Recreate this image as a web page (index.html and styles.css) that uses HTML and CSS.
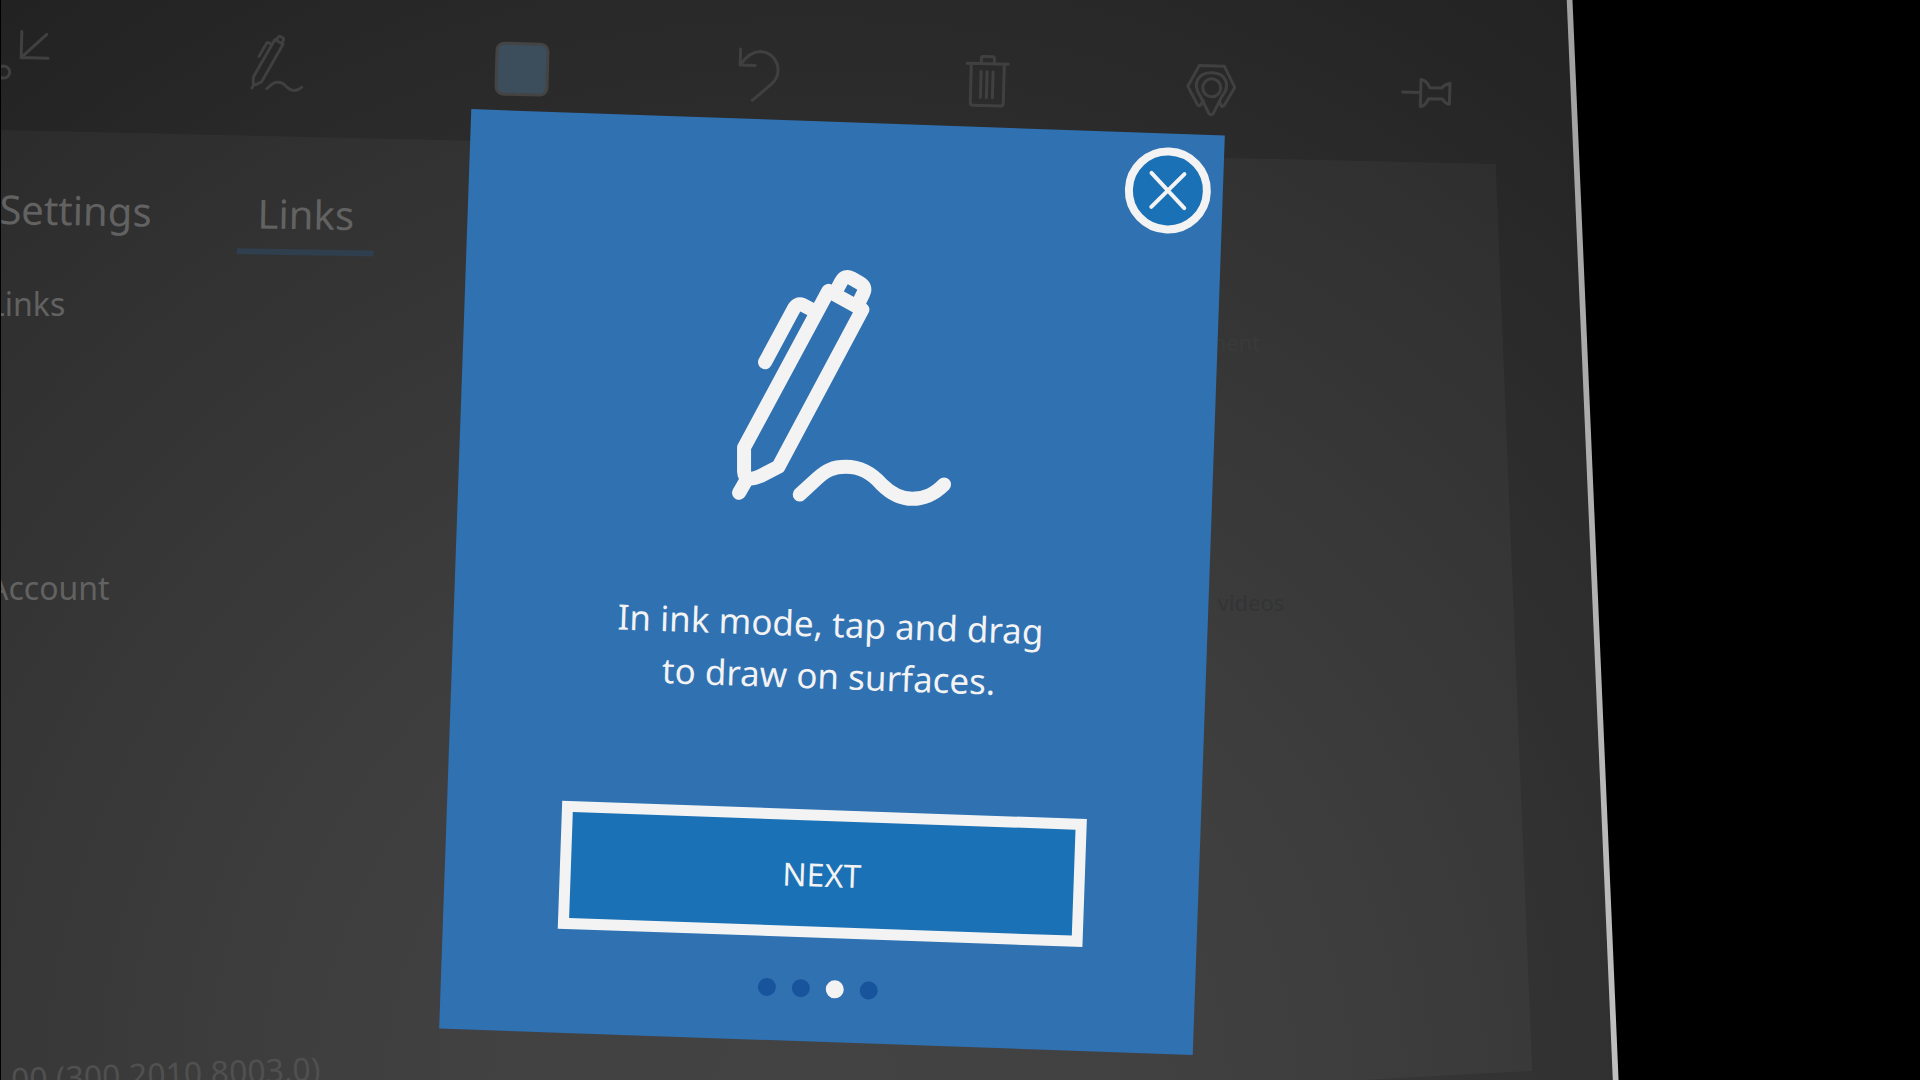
FILE: index.html
```html
<!DOCTYPE html>
<html lang="en">
<head>
<meta charset="utf-8">
<title>Ink mode</title>
<link rel="stylesheet" href="styles.css">
</head>
<body>
<svg class="defs" aria-hidden="true">
  <symbol id="pen" viewBox="0 0 840 840">
    <path d="M385 124 L487 180 L235 652 L180 680 Q133 700 132 665 L132 594 Z"/>
    <path d="M405 130 L424 95 Q435 76 454 86 L480 101 Q499 112 490 131 L476 160"/>
    <path d="M195 338 L280 180 Q290 160 308 166 L338 182"/>
    <path d="M117 730 L137 695"/>
    <path d="M299 735 L350 688 C378 662 400 652 437 652 C480 652 512 668 545 705 C575 735 602 748 637 748 C675 748 702 735 732 705"/>
  </symbol>
</svg>
<main class="stage">
  <div class="edge"></div>
  <div class="slate">
    <div class="toolbar" role="toolbar" aria-label="Tools">
      <button class="tool" aria-label="Minimize"><svg viewBox="0 0 60 60"><path d="M22 6V32H49M47 8L22 32"/><circle cx="5" cy="47" r="6"/></svg></button>
      <button class="tool" aria-label="Ink"><svg class="tool-pen" viewBox="0 0 60 60"><use href="#pen" x="-4" y="-3" width="68" height="68"/></svg></button>
      <button class="tool" aria-label="Colour"><span class="swatch"></span></button>
      <button class="tool" aria-label="Undo"><svg viewBox="0 0 60 60"><path d="M10 4V20H25M10 20C16 11 22 6 30 6C41 6 48 15 48 25C48 31 46 34 42 38L23 55"/></svg></button>
      <button class="tool" aria-label="Delete"><svg viewBox="0 0 60 60"><path d="M10 12H51M14 12V51Q14 54 17 54H44Q47 54 47 51V12M24 12V7Q24 5 26 5H35Q37 5 37 7V12M24 20V46M30 20V46M36 20V46"/></svg></button>
      <button class="tool" aria-label="Locate"><svg viewBox="0 0 60 60"><path d="M22 43L19 48Q17 49 16 47L6 29L17 8H42L53 29L43 47Q42 49 40 48L38 43M32 56Q30 58 28 56L19 39C9 25 17 15 30 15C43 15 50 26 40 39Z"/><circle cx="30" cy="30" r="9"/></svg></button>
      <button class="tool" aria-label="Pin"><svg viewBox="0 0 60 60"><path d="M5 29H23M23 16V43Q28 43 31 35H45Q47 39 52 40V19Q47 20 44 24H32Q28 16 23 16Z"/></svg></button>
    </div>
    <section class="panel">
      <nav class="tabs">
        <a class="tab" href="#settings">Settings</a>
        <a class="tab tab-active" href="#links">Links</a>
      </nav>
      <div class="columns">
        <div class="groups">
          <h2>Links</h2>
          <h2>Account</h2>
          <p class="version">00 (300.2010.8003.0)</p>
        </div>
        <ul class="items">
          <li>ment</li>
          <li class="step-1">o</li>
          <li class="step-2">videos</li>
        </ul>
      </div>
    </section>
  </div>
  <div class="overlay">
    <section class="card" role="dialog" aria-labelledby="message">
      <button class="close" aria-label="Close"><svg viewBox="0 0 70 70"><path d="M18 18L52 52M51 18L19 52"/></svg></button>
      <svg class="pen" viewBox="-4 0 840 840" aria-hidden="true"><g transform="rotate(-2 450 420)"><use href="#pen" width="840" height="840"/></g></svg>
      <p class="message" id="message">In ink mode, tap and drag<br>to draw on surfaces.</p>
      <button class="next">NEXT</button>
      <ol class="dots" aria-label="Step 3 of 4">
        <li></li><li></li><li class="current"></li><li></li>
      </ol>
    </section>
  </div>
</main>
</body>
</html>
```
FILE: styles.css
```css
* {
  box-sizing: border-box;
}

body {
  margin: 0;
  background: #000;
  font-family: "Noto Sans", "Open Sans", sans-serif;
}

button {
  padding: 0;
  border: 0;
  background: none;
  color: inherit;
  font: inherit;
}

h2,
p,
ul,
ol {
  margin: 0;
  padding: 0;
  font-size: inherit;
  font-weight: 400;
  list-style: none;
}

svg {
  fill: none;
  stroke: currentColor;
  stroke-linecap: round;
  stroke-linejoin: round;
}

.defs {
  position: absolute;
  width: 0;
  height: 0;
}

.stage {
  display: grid;
  height: 100vh;
  overflow: hidden;
}

.edge,
.slate,
.overlay {
  grid-area: 1 / 1;
  min-width: 0;
  min-height: 0;
}

/* Lit rim along the right side of the slate */
.edge {
  background: linear-gradient(#a0a0a0, #c0c0c0);
  clip-path: polygon(81% 0, 81.9% 0, 84.3% 100%, 83.5% 100%);
}

.slate {
  padding-top: 25px;
  background: radial-gradient(circle at 42% 102%, #3d3d3d 0, #3b3b3b 350px, #313131 780px, #292929 1100px, #222 1360px);
  clip-path: polygon(1px 0, 81.6% 0, 84% 100%, 1px 100%);
}

.toolbar {
  display: grid;
  grid-template-columns: 247fr 245fr 237fr 227fr 224fr 216fr 60fr;
  width: 76%;
  color: #404040;
  transform: rotate(1.55deg);
  transform-origin: 0 0;
}

.tool {
  display: grid;
  place-items: center;
  width: 60px;
  height: 60px;
}

.tool svg {
  width: 60px;
  height: 60px;
  stroke-width: 3;
}

.tool .tool-pen {
  stroke-width: 36;
}

.swatch {
  width: 54px;
  height: 54px;
  border: 3px solid #444;
  border-radius: 9px;
  background: #3c4d5b;
}

.panel {
  display: flex;
  flex-direction: column;
  height: 1000px;
  margin-top: 45px;
  padding-top: 44px;
  background: rgba(255, 255, 255, 0.035);
  clip-path: polygon(0 0, 77.9% 34px, 79.8% 941px, 70% 951px, 0 100%);
  color: #626262;
}

.tabs {
  display: flex;
  gap: 86px;
  transform: rotate(1deg);
  transform-origin: 0 0;
}

.tab {
  padding: 0 20px;
  margin-left: -20px;
  border-bottom: 6px solid transparent;
  color: inherit;
  font-size: 40px;
  line-height: 70px;
  text-decoration: none;
}

.tab-active {
  border-color: #2f3f4d;
}

.columns {
  display: grid;
  grid-template-columns: 62.8% 1fr;
}

.groups {
  display: grid;
  grid-template-rows: 284px 492px 48px;
  margin-left: -12px;
  padding-top: 34px;
  font-size: 32px;
  line-height: 40px;
}

.version {
  padding-left: 24px;
  color: #505050;
  transform: rotate(-2deg);
  transform-origin: 0 100%;
}

.items {
  display: grid;
  grid-template-rows: repeat(3, 130px);
  align-content: start;
  padding-top: 76px;
  color: #393a3b;
  font-size: 22px;
  line-height: 32px;
}

.step-1 {
  padding-left: 6px;
}

.step-2 {
  padding-left: 12px;
  color: #333435;
}

.overlay {
  padding-top: 122px;
  padding-left: 455px;
}

.card {
  position: relative;
  display: flex;
  flex-direction: column;
  align-items: center;
  width: 754px;
  height: 920px;
  padding-top: 127px;
  background: #3071b2;
  color: #f3f3f3;
  transform: rotate(2deg);
}

.close {
  position: absolute;
  top: 14px;
  right: 12px;
  width: 86px;
  height: 86px;
  border: 8px solid #f3f3f3;
  border-radius: 50%;
  background: #1b71b5;
}

.close svg {
  display: block;
  width: 70px;
  height: 70px;
  stroke-width: 4;
}

.pen {
  flex: none;
  width: 280px;
  height: 280px;
  stroke-width: 42;
}

.message {
  margin-top: 69px;
  font-size: 35px;
  line-height: 52px;
  text-align: center;
}

.next {
  width: 525px;
  height: 128px;
  margin-top: 108px;
  border: 11px solid #f3f3f3;
  background: #1b71b5;
  font-size: 32px;
}

.dots {
  display: flex;
  gap: 16px;
  margin-top: 42px;
}

.dots li {
  width: 18px;
  height: 18px;
  border-radius: 50%;
  background: #17549c;
}

.dots .current {
  background: #f3f3f3;
}
```
